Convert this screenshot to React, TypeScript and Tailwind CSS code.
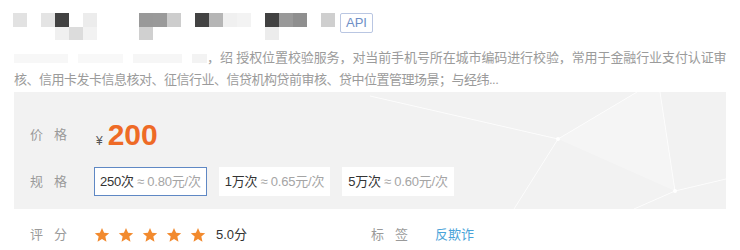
import React from "react";

// 标题被打码，用灰色马赛克块表示
const mosaicTop = [
  "#e2e2e2", "", "#e4e4e4", "#424242", "", "#ececec", "", "", "",
  "#999999", "#9a9a9a", "#cdcdcd", "", "#434343", "#b5b5b5", "#f0f0f0",
  "#f3f3f3", "", "#414141", "#999999", "#8f8f8f", "", "#cfcfcf",
];
const mosaicBottom: Record<number, string> = {
  3: "#f0f0f0",
  4: "#dcdcdc",
  5: "#f2f2f2",
  9: "#d0d0d0",
  18: "#ececec",
};

const specs = [
  { count: "250次", unit: "≈ 0.80元/次", active: true },
  { count: "1万次", unit: "≈ 0.65元/次", active: false },
  { count: "5万次", unit: "≈ 0.60元/次", active: false },
];

function Star() {
  return (
    <svg width="16" height="16" viewBox="0 0 24 24">
      <path
        d="M12 1.5l3.1 7.1 7.7.7-5.8 5.1 1.7 7.6L12 18l-6.7 4 1.7-7.6-5.8-5.1 7.7-.7z"
        fill="#f28a2e"
      />
    </svg>
  );
}

function Label({ a, b }: { a: string; b: string }) {
  return (
    <div className="w-[64px] shrink-0 flex gap-[11px] text-[13px] text-[#9a9a9a]">
      <span>{a}</span>
      <span>{b}</span>
    </div>
  );
}

export default function App() {
  return (
    <div
      className="w-[740px] h-[250px] bg-white overflow-hidden"
      style={{ fontFamily: '"Liberation Sans", "Noto Sans CJK SC", sans-serif' }}
    >
      {/* 标题 */}
      <div className="flex items-start pl-[13px] pt-[13px] h-[40px]">
        <div className="flex flex-col">
          <div className="flex">
            {mosaicTop.map((c, i) => (
              <div
                key={i}
                className="w-[14px] h-[14px]"
                style={{ backgroundColor: c || "transparent" }}
              />
            ))}
          </div>
          <div className="flex">
            {mosaicTop.map((_, i) => (
              <div
                key={i}
                className="w-[14px] h-[13px]"
                style={{ backgroundColor: mosaicBottom[i] || "transparent" }}
              />
            ))}
          </div>
        </div>
        <div className="ml-[5px] h-[20px] px-[5px] border border-[#b9c6e2] rounded-[2px] text-[13px] leading-[18px] text-[#6f8fc6]">
          API
        </div>
      </div>

      {/* 描述 */}
      <div className="mt-[7px] pl-[14px] text-[13px] leading-[22px] text-[#9b9b9b] whitespace-nowrap">
        <div className="flex items-center">
          <div className="w-[193px] h-[9px] flex gap-[10px]">
            <div className="w-[55px] bg-[#f7f7f7]" />
            <div className="w-[45px] bg-[#f8f8f8]" />
            <div className="w-[50px] bg-[#f6f6f6]" />
            <div className="w-[15px] bg-[#f3f3f3]" />
          </div>
          <span className="tracking-[-0.1px]">
            ，绍 授权位置校验服务，对当前手机号所在城市编码进行校验，常用于金融行业支付认证审
          </span>
        </div>
        <div className="tracking-[-0.5px]">
          核、信用卡发卡信息核对、征信行业、信贷机构贷前审核、贷中位置管理场景；与经纬...
        </div>
      </div>

      {/* 价格与规格 */}
      <div className="relative mx-[14px] mt-[1px] h-[117px] bg-[#f2f2f2] pl-[16px] pt-[23px] overflow-hidden">
        <svg
          className="absolute inset-0 pointer-events-none"
          width="712"
          height="117"
          viewBox="0 0 712 117"
        >
          <polygon points="544,47 623,0 646,0 661,99" fill="#ffffff" opacity="0.25" />
          <g stroke="#ffffff" strokeWidth="1" opacity="0.8">
            <line x1="356" y1="4" x2="544" y2="47" />
            <line x1="544" y1="47" x2="623" y2="0" />
            <line x1="544" y1="47" x2="500" y2="117" />
            <line x1="646" y1="0" x2="661" y2="99" />
            <line x1="661" y1="99" x2="712" y2="87" />
            <line x1="661" y1="99" x2="620" y2="117" />
          </g>
          <circle cx="544" cy="47" r="2" fill="#ffffff" />
          <circle cx="661" cy="99" r="2" fill="#ffffff" />
        </svg>

        <div className="relative flex items-center h-[40px]">
          <Label a="价" b="格" />
          <div className="flex items-baseline pl-[2px]">
            <span className="text-[12px] text-[#555555] mr-[5px]">¥</span>
            <span className="text-[30px] leading-none font-bold text-[#ee6a26]">200</span>
          </div>
        </div>

        <div className="relative flex items-center mt-[12px] h-[29px]">
          <Label a="规" b="格" />
          <div className="flex gap-[12px]">
            {specs.map((s) => (
              <div
                key={s.count}
                className={`h-[29px] px-[5px] flex items-center gap-[3px] bg-white text-[13px] tracking-[-0.2px] border ${
                  s.active ? "border-[#5f88c4]" : "border-white"
                }`}
              >
                <span className="text-[#333333]">{s.count}</span>
                <span className="text-[#a5a5a5]">{s.unit}</span>
              </div>
            ))}
          </div>
        </div>
      </div>

      {/* 评分与标签 */}
      <div className="flex items-center pl-[30px] h-[52px]">
        <Label a="评" b="分" />
        <div className="flex items-center gap-[8px]">
          {[0, 1, 2, 3, 4].map((i) => (
            <Star key={i} />
          ))}
        </div>
        <span className="ml-[10px] text-[13px] text-[#333333]">5.0分</span>
        <div className="ml-[124px] flex items-center">
          <Label a="标" b="签" />
          <span className="text-[13px] text-[#4aa3d9]">反欺诈</span>
        </div>
      </div>
    </div>
  );
}
